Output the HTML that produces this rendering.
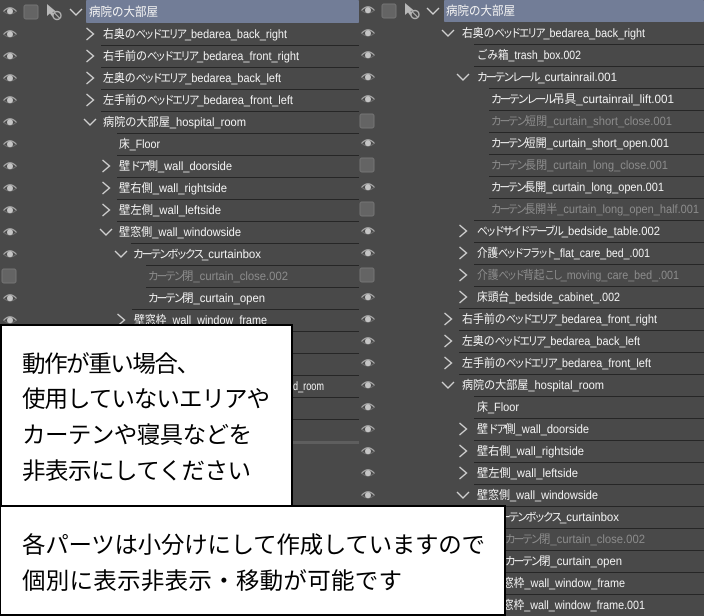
<!DOCTYPE html>
<html lang="ja"><head><meta charset="utf-8"><title>パーツ</title>
<style>
html,body{margin:0;padding:0;background:#494949;width:704px;height:616px;overflow:hidden}
svg{display:block}
text{font-family:"Liberation Sans","Noto Sans CJK JP",sans-serif;font-size:12px;fill:#f2f2f2}
text.d{fill:#8c8c8c}
text.h{font-size:12.5px}
tspan.k{font-size:11.5px;letter-spacing:-2.4px}
text.b{font-family:"Noto Sans CJK JP","Liberation Sans",sans-serif;font-size:23.5px;fill:#000}
.l{stroke:#262626;stroke-width:1}
</style></head><body>
<svg xmlns="http://www.w3.org/2000/svg" width="704" height="616" viewBox="0 0 704 616" text-rendering="geometricPrecision">
<defs>
<g id="e"><path d="M-6.500 .5Q0-7 6.500 .5" fill="none" stroke="#a8a8a8" stroke-width="1.2"/><path d="M-5.500 1Q0 5 5.500 1" fill="none" stroke="#707070" stroke-width="1"/><circle r="3" cy=".3" fill="#c4c4c4"/></g>
<rect id="c" x="-7" y="-7" width="14" height="14" rx="2" fill="#646464" stroke="#747474"/>
<path id="r" d="M-3.500-6L3.500 0-3.500 6" fill="none" stroke="#d0d0d0" stroke-width="1.4"/>
<path id="v" d="M-6-3L0 3 6-3" fill="none" stroke="#d0d0d0" stroke-width="1.4"/>
<g id="a"><path d="M0 0V12L3 9.500 5.500 13 7.500 11.500 5.500 8 9 7.500Z" fill="#b8b8b8"/><circle cx="10" cy="11.500" r="4" fill="#494949" stroke="#b0b0b0" stroke-width="1.4"/><path d="M7.500 9L12.500 14" stroke="#b0b0b0" stroke-width="1.2"/></g>
</defs>
<rect width="704" height="616" fill="#494949"/>

<!-- left panel -->
<rect x="86" y="0" width="273" height="23" rx="1" fill="#727d97"/>
<use href="#e" x="10" y="11"/><use href="#c" x="31" y="12"/><use href="#a" x="47" y="4"/><use href="#v" x="76" y="12"/>
<g class="l">
<path d="M101 45.500H359M101 67.500H359M101 89.500H359M101 111.500H359M117 133.500H359M117 155.500H359M117 177.500H359M117 199.500H359M117 221.500H359M131 243.500H359M146 265.500H359M146 287.500H359M132 309.500H359M132 331.500H359M132 353.500H359M132 375.500H359M132 397.500H359M132 419.500H359"/>
</g>
<rect x="292" y="441" width="67" height="3" fill="#5e5e5e"/>
<use href="#e" x="10" y="34"/><use href="#e" x="10" y="56"/><use href="#e" x="10" y="78"/><use href="#e" x="10" y="100"/><use href="#e" x="10" y="122"/><use href="#e" x="10" y="144"/><use href="#e" x="10" y="166"/><use href="#e" x="10" y="188"/><use href="#e" x="10" y="210"/><use href="#e" x="10" y="232"/><use href="#e" x="10" y="254"/><use href="#c" x="9" y="276"/><use href="#e" x="10" y="298"/><use href="#e" x="10" y="320"/>
<use href="#r" x="90" y="34"/><use href="#r" x="90" y="56"/><use href="#r" x="90" y="78"/><use href="#r" x="90" y="100"/><use href="#v" x="90" y="122"/>
<use href="#r" x="106" y="166"/><use href="#r" x="106" y="188"/><use href="#r" x="106" y="210"/><use href="#v" x="106" y="232"/><use href="#v" x="121" y="254"/><use href="#r" x="121" y="320"/>
<text class="h" x="89" y="16" textLength="69" lengthAdjust="spacingAndGlyphs">病院の大部屋</text>
<text x="103" y="38" textLength="184" lengthAdjust="spacingAndGlyphs">右奥の<tspan class="k">ベッドエリア</tspan>_bedarea_back_right</text>
<text x="103" y="60" textLength="196" lengthAdjust="spacingAndGlyphs">右手前の<tspan class="k">ベッドエリア</tspan>_bedarea_front_right</text>
<text x="103" y="82" textLength="178" lengthAdjust="spacingAndGlyphs">左奥の<tspan class="k">ベッドエリア</tspan>_bedarea_back_left</text>
<text x="103" y="104" textLength="190" lengthAdjust="spacingAndGlyphs">左手前の<tspan class="k">ベッドエリア</tspan>_bedarea_front_left</text>
<text x="103" y="126" textLength="143" lengthAdjust="spacingAndGlyphs">病院の大部屋_hospital_room</text>
<text x="119" y="148" textLength="41" lengthAdjust="spacingAndGlyphs">床_Floor</text>
<text x="119" y="170" textLength="113" lengthAdjust="spacingAndGlyphs">壁<tspan class="k">ドア</tspan>側_wall_doorside</text>
<text x="119" y="192" textLength="108" lengthAdjust="spacingAndGlyphs">壁右側_wall_rightside</text>
<text x="119" y="214" textLength="102" lengthAdjust="spacingAndGlyphs">壁左側_wall_leftside</text>
<text x="119" y="236" textLength="122" lengthAdjust="spacingAndGlyphs">壁窓側_wall_windowside</text>
<text x="133" y="258" textLength="128" lengthAdjust="spacingAndGlyphs"><tspan class="k">カーテンボックス</tspan>_curtainbox</text>
<text class="d" x="148" y="280" textLength="140" lengthAdjust="spacingAndGlyphs"><tspan class="k">カーテン</tspan>閉_curtain_close.002</text>
<text x="148" y="302" textLength="117" lengthAdjust="spacingAndGlyphs"><tspan class="k">カーテン</tspan>閉_curtain_open</text>
<text x="134" y="324" textLength="133" lengthAdjust="spacingAndGlyphs">壁窓枠_wall_window_frame</text>
<text x="293" y="390" textLength="31" lengthAdjust="spacingAndGlyphs">d_room</text>

<!-- right panel -->
<rect x="359" y="0" width="345" height="616" fill="#494949"/>
<rect x="444" y="0" width="260" height="22" rx="1" fill="#727d97"/>
<use href="#e" x="368" y="10"/><use href="#c" x="389" y="11"/><use href="#a" x="405" y="3"/><use href="#v" x="433" y="11"/>
<g class="l">
<path d="M474 44.500H704M474 66.500H704M489 88.500H704M489 110.500H704M489 132.500H704M489 154.500H704M489 176.500H704M489 198.500H704M474 220.500H704M474 242.500H704M474 264.500H704M474 286.500H704M459 308.500H704M459 330.500H704M459 352.500H704M459 374.500H704M474 396.500H704M474 418.500H704M474 440.500H704M474 462.500H704M474 484.500H704M474 506.500H704M489 528.500H704M503 550.500H704M503 572.500H704M490 594.500H704"/>
</g>
<use href="#e" x="368" y="33"/><use href="#e" x="368" y="55"/><use href="#e" x="368" y="77"/><use href="#e" x="368" y="99"/><use href="#c" x="367" y="121"/><use href="#e" x="368" y="143"/><use href="#c" x="367" y="165"/><use href="#e" x="368" y="187"/><use href="#c" x="367" y="209"/><use href="#e" x="368" y="231"/><use href="#e" x="368" y="253"/><use href="#c" x="367" y="275"/><use href="#e" x="368" y="297"/><use href="#e" x="368" y="319"/><use href="#e" x="368" y="341"/><use href="#e" x="368" y="363"/><use href="#e" x="368" y="385"/><use href="#e" x="368" y="407"/><use href="#e" x="368" y="429"/><use href="#e" x="368" y="451"/><use href="#e" x="368" y="473"/><use href="#e" x="368" y="495"/>
<use href="#v" x="448" y="33"/><use href="#v" x="463" y="77"/><use href="#r" x="463" y="231"/><use href="#r" x="463" y="253"/><use href="#r" x="463" y="275"/><use href="#r" x="463" y="297"/><use href="#r" x="448" y="319"/><use href="#r" x="448" y="341"/><use href="#r" x="448" y="363"/><use href="#v" x="448" y="385"/><use href="#r" x="463" y="429"/><use href="#r" x="463" y="451"/><use href="#r" x="463" y="473"/><use href="#v" x="463" y="495"/>
<text class="h" x="446" y="15" textLength="69" lengthAdjust="spacingAndGlyphs">病院の大部屋</text>
<text x="462" y="37" textLength="183" lengthAdjust="spacingAndGlyphs">右奥の<tspan class="k">ベッドエリア</tspan>_bedarea_back_right</text>
<text x="477" y="59" textLength="104" lengthAdjust="spacingAndGlyphs">ごみ箱_trash_box.002</text>
<text x="477" y="81" textLength="140" lengthAdjust="spacingAndGlyphs"><tspan class="k">カーテンレール</tspan>_curtainrail.001</text>
<text x="491" y="103" textLength="183" lengthAdjust="spacingAndGlyphs"><tspan class="k">カーテンレール</tspan>吊具_curtainrail_lift.001</text>
<text class="d" x="491" y="125" textLength="181" lengthAdjust="spacingAndGlyphs"><tspan class="k">カーテン</tspan>短閉_curtain_short_close.001</text>
<text x="491" y="147" textLength="178" lengthAdjust="spacingAndGlyphs"><tspan class="k">カーテン</tspan>短開_curtain_short_open.001</text>
<text class="d" x="491" y="169" textLength="177" lengthAdjust="spacingAndGlyphs"><tspan class="k">カーテン</tspan>長閉_curtain_long_close.001</text>
<text x="491" y="191" textLength="173" lengthAdjust="spacingAndGlyphs"><tspan class="k">カーテン</tspan>長開_curtain_long_open.001</text>
<text class="d" x="491" y="213" textLength="208" lengthAdjust="spacingAndGlyphs"><tspan class="k">カーテン</tspan>長開半_curtain_long_open_half.001</text>
<text x="477" y="235" textLength="183" lengthAdjust="spacingAndGlyphs"><tspan class="k">ベッドサイドテーブル</tspan>_bedside_table.002</text>
<text x="477" y="257" textLength="173" lengthAdjust="spacingAndGlyphs">介護<tspan class="k">ベッドフラット</tspan>_flat_care_bed_.001</text>
<text class="d" x="477" y="279" textLength="202" lengthAdjust="spacingAndGlyphs">介護<tspan class="k">ベッド</tspan>背起<tspan class="k">こし</tspan>_moving_care_bed_.001</text>
<text x="477" y="301" textLength="143" lengthAdjust="spacingAndGlyphs">床頭台_bedside_cabinet_.002</text>
<text x="462" y="323" textLength="195" lengthAdjust="spacingAndGlyphs">右手前の<tspan class="k">ベッドエリア</tspan>_bedarea_front_right</text>
<text x="462" y="345" textLength="178" lengthAdjust="spacingAndGlyphs">左奥の<tspan class="k">ベッドエリア</tspan>_bedarea_back_left</text>
<text x="462" y="367" textLength="189" lengthAdjust="spacingAndGlyphs">左手前の<tspan class="k">ベッドエリア</tspan>_bedarea_front_left</text>
<text x="462" y="389" textLength="142" lengthAdjust="spacingAndGlyphs">病院の大部屋_hospital_room</text>
<text x="477" y="411" textLength="42" lengthAdjust="spacingAndGlyphs">床_Floor</text>
<text x="477" y="433" textLength="112" lengthAdjust="spacingAndGlyphs">壁<tspan class="k">ドア</tspan>側_wall_doorside</text>
<text x="477" y="455" textLength="107" lengthAdjust="spacingAndGlyphs">壁右側_wall_rightside</text>
<text x="477" y="477" textLength="101" lengthAdjust="spacingAndGlyphs">壁左側_wall_leftside</text>
<text x="477" y="499" textLength="121" lengthAdjust="spacingAndGlyphs">壁窓側_wall_windowside</text>
<text x="491" y="521" textLength="128" lengthAdjust="spacingAndGlyphs"><tspan class="k">カーテンボックス</tspan>_curtainbox</text>
<text class="d" x="505" y="543" textLength="140" lengthAdjust="spacingAndGlyphs"><tspan class="k">カーテン</tspan>閉_curtain_close.002</text>
<text x="505" y="565" textLength="117" lengthAdjust="spacingAndGlyphs"><tspan class="k">カーテン</tspan>閉_curtain_open</text>
<text x="492" y="587" textLength="133" lengthAdjust="spacingAndGlyphs">壁窓枠_wall_window_frame</text>
<text x="492" y="609" textLength="153" lengthAdjust="spacingAndGlyphs">壁窓枠_wall_window_frame.001</text>

<!-- callouts -->
<rect x="0" y="324" width="293" height="182" fill="#000"/>
<rect x="2" y="326" width="289" height="179" fill="#fff"/>
<text class="b" x="22" y="372" textLength="178">動作が重い場合、</text>
<text class="b" x="22" y="407" textLength="248">使用していないエリアや</text>
<text class="b" x="22" y="443" textLength="230">カーテンや寝具などを</text>
<text class="b" x="22" y="479" textLength="229">非表示にしてください</text>
<rect x="0" y="505" width="506" height="111" fill="#000"/>
<rect x="1" y="507" width="503" height="107" fill="#fff"/>
<text class="b" x="22" y="553" textLength="463">各パーツは小分けにして作成していますので</text>
<text class="b" x="22" y="589" textLength="380">個別に表示非表示・移動が可能です</text>
</svg>
</body></html>
